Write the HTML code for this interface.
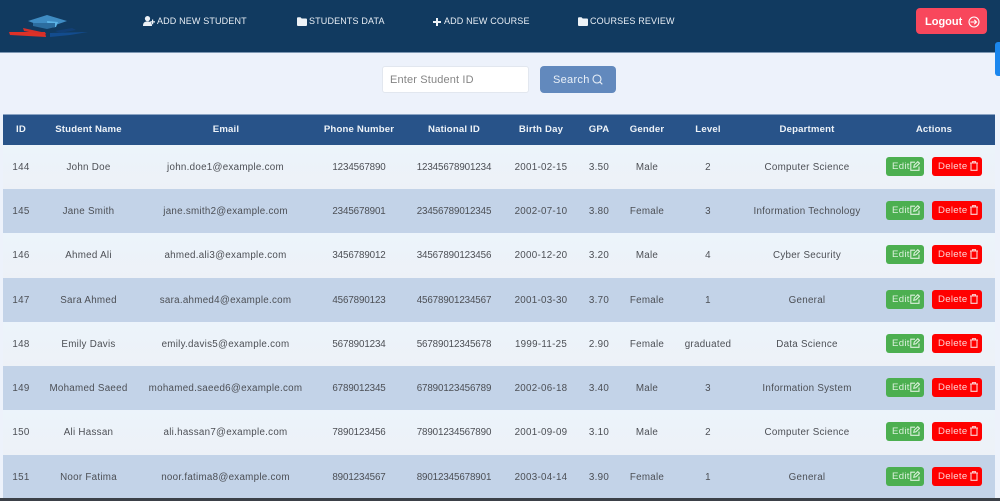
<!DOCTYPE html>
<html><head><meta charset="utf-8"><style>
*{box-sizing:border-box}
html,body{margin:0;padding:0;width:1000px;height:501px;overflow:hidden;background:#edf2fb;font-family:"Liberation Sans",sans-serif}
.a{position:absolute}
.nav{left:0;top:0;width:1000px;height:53px;background:#113a60;border-bottom:1px solid #7d97b3}
.nl{position:absolute;top:15px;color:#e8eef5;font-size:9px;letter-spacing:.15px;line-height:13px;white-space:nowrap}
.nl svg{vertical-align:-1.5px;margin-right:2px}
.logout{left:916px;top:8px;width:71px;height:26px;background:#f8475c;border-radius:4px;color:#fff;font-size:11px;font-weight:bold;line-height:28px;padding-left:9px}
.tab{left:995px;top:42px;width:5px;height:34px;background:#1b87ee;border-radius:3px 0 0 3px}
.inp{left:382px;top:66px;width:147px;height:27px;background:#fff;border:1px solid #e2e7ef;border-radius:3px;color:#858585;font-size:11px;line-height:26px;padding-left:7px;letter-spacing:.15px}
.sb{left:540px;top:66px;width:76px;height:27px;background:#6289bd;border-radius:4px;color:#e9f0f8;font-size:11px;line-height:28px;padding-left:13px;letter-spacing:.3px}
.hd{left:3px;top:114px;width:992px;height:31px;background:#285389;border-top:1px solid #8aa3c3}
.r{position:absolute;left:3px;width:992px;background:#c3d3e8}
.o{background:linear-gradient(#ecf4fb,#edf1f7)}
.t{position:absolute;transform:translateX(-50%);white-space:nowrap;font-size:9.8px;letter-spacing:.27px;color:#4c4f55;line-height:12px;top:17px}
.n{letter-spacing:-.12px}
.hd .t{color:#eef3f8;font-weight:bold;font-size:9.6px;letter-spacing:.17px;top:8.500px}
.e,.d{position:absolute;top:12px;height:19px;border-radius:3px;color:#dcf0dc;font-size:9.6px;line-height:19.500px;letter-spacing:.3px;white-space:nowrap}
.e{left:883px;width:38px;background:#4caf50;padding-left:6px}
.d{left:929px;width:50px;background:#ff0000;color:#fbd4d4;padding-left:6px}
.e svg,.d svg{position:absolute;top:4px}
.e svg{right:4px}.d svg{right:3.500px}
</style></head><body>
<div class="a nav"></div>
<svg class="a" style="left:0;top:0" width="110" height="50" viewBox="0 0 110 50">
<path d="M28 21 47 15 67 21 47 28Z" fill="#3f8cc3"/>
<path d="M47 21 58 22 56 27 48 28Z" fill="#5cb4e6"/>
<path d="M33 23H55V27L47 29 33 26Z" fill="#2c6d9f"/>
<path d="M9 32 45 32 46 37 10 35Z" fill="#dd3127"/>
<path d="M23 28 46 33 45 35 24 31Z" fill="#d5302a"/>
<path d="M50 33 88 32 70 35 50 37Z" fill="#134c8e"/>
<path d="M55 31 72 28 76 30 60 33Z" fill="#123f75"/>
</svg>
<div class="nl" style="left:143px"><svg width="12" height="10" viewBox="0 0 12 10" fill="#edf2f7"><circle cx="4.500" cy="2.600" r="2.600"/><path d="M0 10C0 6.500 1.500 5.500 4.500 5.500S9 6.500 9 10Z"/><path d="M9 3.500h1.200v1.800H12v1.200H10.200V8.300H9V6.500H7.200V5.300H9Z"/></svg>ADD NEW STUDENT</div>
<div class="nl" style="left:297px"><svg width="10" height="9" viewBox="0 0 10 9" fill="#edf2f7"><path d="M0 1.200Q0 .2 1 .2H3.500L4.700 1.500H9Q10 1.500 10 2.500V8Q10 9 9 9H1Q0 9 0 8Z"/></svg>STUDENTS DATA</div>
<div class="nl" style="left:433px"><svg width="8" height="8" viewBox="0 0 8 8" fill="#edf2f7" style="margin-right:3px"><path d="M3 0H5V3H8V5H5V8H3V5H0V3H3Z"/></svg>ADD NEW COURSE</div>
<div class="nl" style="left:578px"><svg width="10" height="9" viewBox="0 0 10 9" fill="#edf2f7"><path d="M0 1.200Q0 .2 1 .2H3.500L4.700 1.500H9Q10 1.500 10 2.500V8Q10 9 9 9H1Q0 9 0 8Z"/></svg>COURSES REVIEW</div>
<div class="a logout">Logout<svg style="position:absolute;left:52px;top:7.500px" width="12" height="12" viewBox="0 0 12 12" fill="none" stroke="#fff" stroke-width="1.100"><circle cx="6" cy="6" r="5"/><path d="M2.500 6H8.500M6.300 3.800 8.500 6 6.300 8.200"/></svg></div>
<div class="a tab"></div>
<div class="a inp">Enter Student ID</div>
<div class="a sb">Search<svg style="position:absolute;left:52px;top:8px" width="11" height="11" viewBox="0 0 11 11" fill="none" stroke="#e9f0f8" stroke-width="1.100"><circle cx="5" cy="5" r="4"/><path d="M8 8 10.300 10.300"/></svg></div>

<div class="a hd">
<span class="t" style="left:18px">ID</span><span class="t" style="left:85.500px">Student Name</span><span class="t" style="left:223px">Email</span><span class="t" style="left:356px">Phone Number</span><span class="t" style="left:451px">National ID</span><span class="t" style="left:538px">Birth Day</span><span class="t" style="left:596px">GPA</span><span class="t" style="left:644px">Gender</span><span class="t" style="left:705px">Level</span><span class="t" style="left:804px">Department</span><span class="t" style="left:931px">Actions</span>
</div>

<div class="r o" style="top:145px;height:44px">
<span class="t" style="left:18px">144</span><span class="t" style="left:85.500px">John Doe</span><span class="t" style="left:222.500px">john.doe1@example.com</span><span class="t n" style="left:356px">1234567890</span><span class="t n" style="left:451px">12345678901234</span><span class="t" style="left:538px">2001-02-15</span><span class="t" style="left:596px">3.50</span><span class="t" style="left:644px">Male</span><span class="t" style="left:705px">2</span><span class="t" style="left:804px">Computer Science</span>
<div class="e">Edit<svg width="10" height="10" viewBox="0 0 10 10" fill="none" stroke="#dcf0dc" stroke-width="1.100"><path d="M9 5.500V9.300H.8V1.200H5M3.800 6.300 4.300 4 7.800 .7 9.500 2.300 6 5.800Z"/></svg></div><div class="d">Delete<svg width="10" height="10" viewBox="0 0 10 10" fill="none" stroke="#fbd4d4" stroke-width="1.100"><path d="M1 2H9M3.500 2V.7H6.500V2M2 2V9.300H8V2"/></svg></div>
</div>
<div class="r" style="top:189px;height:44px">
<span class="t" style="left:18px">145</span><span class="t" style="left:85.500px">Jane Smith</span><span class="t" style="left:222.500px">jane.smith2@example.com</span><span class="t n" style="left:356px">2345678901</span><span class="t n" style="left:451px">23456789012345</span><span class="t" style="left:538px">2002-07-10</span><span class="t" style="left:596px">3.80</span><span class="t" style="left:644px">Female</span><span class="t" style="left:705px">3</span><span class="t" style="left:804px">Information Technology</span>
<div class="e">Edit<svg width="10" height="10" viewBox="0 0 10 10" fill="none" stroke="#dcf0dc" stroke-width="1.100"><path d="M9 5.500V9.300H.8V1.200H5M3.800 6.300 4.300 4 7.800 .7 9.500 2.300 6 5.800Z"/></svg></div><div class="d">Delete<svg width="10" height="10" viewBox="0 0 10 10" fill="none" stroke="#fbd4d4" stroke-width="1.100"><path d="M1 2H9M3.500 2V.7H6.500V2M2 2V9.300H8V2"/></svg></div>
</div>
<div class="r o" style="top:233px;height:44.500px">
<span class="t" style="left:18px">146</span><span class="t" style="left:85.500px">Ahmed Ali</span><span class="t" style="left:222.500px">ahmed.ali3@example.com</span><span class="t n" style="left:356px">3456789012</span><span class="t n" style="left:451px">34567890123456</span><span class="t" style="left:538px">2000-12-20</span><span class="t" style="left:596px">3.20</span><span class="t" style="left:644px">Male</span><span class="t" style="left:705px">4</span><span class="t" style="left:804px">Cyber Security</span>
<div class="e">Edit<svg width="10" height="10" viewBox="0 0 10 10" fill="none" stroke="#dcf0dc" stroke-width="1.100"><path d="M9 5.500V9.300H.8V1.200H5M3.800 6.300 4.300 4 7.800 .7 9.500 2.300 6 5.800Z"/></svg></div><div class="d">Delete<svg width="10" height="10" viewBox="0 0 10 10" fill="none" stroke="#fbd4d4" stroke-width="1.100"><path d="M1 2H9M3.500 2V.7H6.500V2M2 2V9.300H8V2"/></svg></div>
</div>
<div class="r" style="top:277.500px;height:44px">
<span class="t" style="left:18px">147</span><span class="t" style="left:85.500px">Sara Ahmed</span><span class="t" style="left:222.500px">sara.ahmed4@example.com</span><span class="t n" style="left:356px">4567890123</span><span class="t n" style="left:451px">45678901234567</span><span class="t" style="left:538px">2001-03-30</span><span class="t" style="left:596px">3.70</span><span class="t" style="left:644px">Female</span><span class="t" style="left:705px">1</span><span class="t" style="left:804px">General</span>
<div class="e">Edit<svg width="10" height="10" viewBox="0 0 10 10" fill="none" stroke="#dcf0dc" stroke-width="1.100"><path d="M9 5.500V9.300H.8V1.200H5M3.800 6.300 4.300 4 7.800 .7 9.500 2.300 6 5.800Z"/></svg></div><div class="d">Delete<svg width="10" height="10" viewBox="0 0 10 10" fill="none" stroke="#fbd4d4" stroke-width="1.100"><path d="M1 2H9M3.500 2V.7H6.500V2M2 2V9.300H8V2"/></svg></div>
</div>
<div class="r o" style="top:321.500px;height:44.500px">
<span class="t" style="left:18px">148</span><span class="t" style="left:85.500px">Emily Davis</span><span class="t" style="left:222.500px">emily.davis5@example.com</span><span class="t n" style="left:356px">5678901234</span><span class="t n" style="left:451px">56789012345678</span><span class="t" style="left:538px">1999-11-25</span><span class="t" style="left:596px">2.90</span><span class="t" style="left:644px">Female</span><span class="t" style="left:705px">graduated</span><span class="t" style="left:804px">Data Science</span>
<div class="e">Edit<svg width="10" height="10" viewBox="0 0 10 10" fill="none" stroke="#dcf0dc" stroke-width="1.100"><path d="M9 5.500V9.300H.8V1.200H5M3.800 6.300 4.300 4 7.800 .7 9.500 2.300 6 5.800Z"/></svg></div><div class="d">Delete<svg width="10" height="10" viewBox="0 0 10 10" fill="none" stroke="#fbd4d4" stroke-width="1.100"><path d="M1 2H9M3.500 2V.7H6.500V2M2 2V9.300H8V2"/></svg></div>
</div>
<div class="r" style="top:366px;height:44px">
<span class="t" style="left:18px">149</span><span class="t" style="left:85.500px">Mohamed Saeed</span><span class="t" style="left:222.500px">mohamed.saeed6@example.com</span><span class="t n" style="left:356px">6789012345</span><span class="t n" style="left:451px">67890123456789</span><span class="t" style="left:538px">2002-06-18</span><span class="t" style="left:596px">3.40</span><span class="t" style="left:644px">Male</span><span class="t" style="left:705px">3</span><span class="t" style="left:804px">Information System</span>
<div class="e">Edit<svg width="10" height="10" viewBox="0 0 10 10" fill="none" stroke="#dcf0dc" stroke-width="1.100"><path d="M9 5.500V9.300H.8V1.200H5M3.800 6.300 4.300 4 7.800 .7 9.500 2.300 6 5.800Z"/></svg></div><div class="d">Delete<svg width="10" height="10" viewBox="0 0 10 10" fill="none" stroke="#fbd4d4" stroke-width="1.100"><path d="M1 2H9M3.500 2V.7H6.500V2M2 2V9.300H8V2"/></svg></div>
</div>
<div class="r o" style="top:410px;height:44.500px">
<span class="t" style="left:18px">150</span><span class="t" style="left:85.500px">Ali Hassan</span><span class="t" style="left:222.500px">ali.hassan7@example.com</span><span class="t n" style="left:356px">7890123456</span><span class="t n" style="left:451px">78901234567890</span><span class="t" style="left:538px">2001-09-09</span><span class="t" style="left:596px">3.10</span><span class="t" style="left:644px">Male</span><span class="t" style="left:705px">2</span><span class="t" style="left:804px">Computer Science</span>
<div class="e">Edit<svg width="10" height="10" viewBox="0 0 10 10" fill="none" stroke="#dcf0dc" stroke-width="1.100"><path d="M9 5.500V9.300H.8V1.200H5M3.800 6.300 4.300 4 7.800 .7 9.500 2.300 6 5.800Z"/></svg></div><div class="d">Delete<svg width="10" height="10" viewBox="0 0 10 10" fill="none" stroke="#fbd4d4" stroke-width="1.100"><path d="M1 2H9M3.500 2V.7H6.500V2M2 2V9.300H8V2"/></svg></div>
</div>
<div class="r" style="top:454.500px;height:44px">
<span class="t" style="left:18px">151</span><span class="t" style="left:85.500px">Noor Fatima</span><span class="t" style="left:222.500px">noor.fatima8@example.com</span><span class="t n" style="left:356px">8901234567</span><span class="t n" style="left:451px">89012345678901</span><span class="t" style="left:538px">2003-04-14</span><span class="t" style="left:596px">3.90</span><span class="t" style="left:644px">Female</span><span class="t" style="left:705px">1</span><span class="t" style="left:804px">General</span>
<div class="e">Edit<svg width="10" height="10" viewBox="0 0 10 10" fill="none" stroke="#dcf0dc" stroke-width="1.100"><path d="M9 5.500V9.300H.8V1.200H5M3.800 6.300 4.300 4 7.800 .7 9.500 2.300 6 5.800Z"/></svg></div><div class="d">Delete<svg width="10" height="10" viewBox="0 0 10 10" fill="none" stroke="#fbd4d4" stroke-width="1.100"><path d="M1 2H9M3.500 2V.7H6.500V2M2 2V9.300H8V2"/></svg></div>
</div>
<div class="a" style="left:0;top:498px;width:1000px;height:3px;background:#3b4047"></div>
</body></html>
